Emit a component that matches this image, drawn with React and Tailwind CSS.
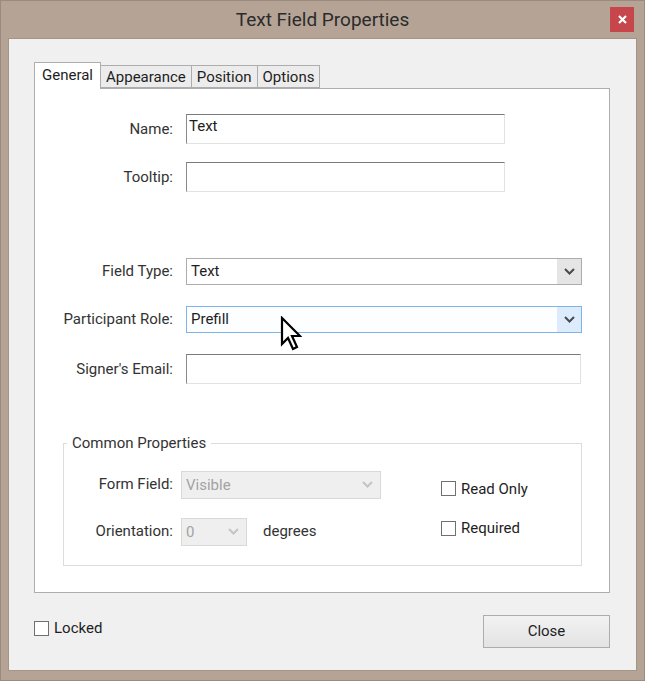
import React from "react";

const font = { fontFamily: "Roboto, 'Open Sans', sans-serif" };

function Chevron({ color = "#4a4a4a" }) {
  return (
    <svg width="11" height="7" viewBox="0 0 11 7">
      <polyline points="1,1 5.5,5.5 10,1" fill="none" stroke={color} strokeWidth="2" />
    </svg>
  );
}

function TextBox({ value, w }) {
  return (
    <div className={`${w} h-[30px] bg-white border border-t-[#7a7a7a] border-l-[#8a8a8a] border-r-[#e2e2e2] border-b-[#e2e2e2] px-[2px] text-[15px] leading-[22px] text-[#1e1e1e]`}>
      {value}
    </div>
  );
}

function Select({ value, focused }) {
  return (
    <div className={`w-[396px] h-[27px] flex border ${focused ? "border-[#7eb4ea] bg-[#fdfeff]" : "border-[#acacac] bg-white"}`}>
      <div className="flex-1 px-[4px] text-[15px] leading-[25px] text-[#1e1e1e]">{value}</div>
      <div className={`w-[24px] flex items-center justify-center ${focused ? "bg-[#dcecfc]" : "bg-[#e5e5e5]"}`}>
        <Chevron />
      </div>
    </div>
  );
}

function DisabledSelect({ value, w }) {
  return (
    <div className={`${w} h-[28px] flex border border-[#d9d9d9] bg-[#efefef]`}>
      <div className="flex-1 px-[4px] text-[15px] leading-[26px] text-[#a3a3a3]">{value}</div>
      <div className="w-[26px] flex items-center justify-center">
        <Chevron color="#c4c4c4" />
      </div>
    </div>
  );
}

function Check({ label }) {
  return (
    <div className="flex items-center gap-[5px] text-[15px] text-[#1e1e1e]">
      <div className="w-[15px] h-[15px] border border-[#707070] bg-white" />
      <span>{label}</span>
    </div>
  );
}

function Row({ label, children }) {
  return (
    <div className="flex items-center">
      <div className="w-[138px] text-right text-[15px] text-[#333]">{label}</div>
      <div className="ml-[13px]">{children}</div>
    </div>
  );
}

export default function App() {
  return (
    <div style={font} className="relative w-[645px] h-[681px] bg-[#b5a496] border border-[#9c8b7d] flex flex-col">
      {/* title bar */}
      <div className="relative h-[37px] flex items-center justify-center">
        <span className="text-[19px] text-[#2b2b2b] pt-[1px]">Text Field Properties</span>
        <div className="absolute right-[10px] top-[6px] w-[24px] h-[25px] bg-[#c7464b] flex items-center justify-center">
          <svg width="9" height="9" viewBox="0 0 9 9">
            <path d="M1 1 L8 8 M8 1 L1 8" stroke="white" strokeWidth="2.2" />
          </svg>
        </div>
      </div>

      {/* client area */}
      <div className="flex-1 mx-[7px] mb-[9px] bg-[#f0f0f0] border border-[#a59585] flex flex-col pl-[25px] pr-[26px] pt-[23px]">
        {/* tabs */}
        <div className="flex items-end h-[26px] text-[15px] text-[#1e1e1e]">
          <div className="relative z-10 h-[27px] -mb-px px-[7px] bg-white border border-b-0 border-[#adadad] leading-[24px]">General</div>
          <div className="h-[23px] px-[5px] bg-[#ececec] border border-l-0 border-[#adadad] leading-[22px]">Appearance</div>
          <div className="h-[23px] px-[5px] bg-[#ececec] border border-l-0 border-[#adadad] leading-[22px]">Position</div>
          <div className="h-[23px] px-[5px] bg-[#ececec] border border-l-0 border-[#adadad] leading-[22px]">Options</div>
        </div>

        {/* panel */}
        <div className="h-[505px] bg-white border border-[#adadad] flex flex-col pt-[25px]">
          <Row label="Name:"><TextBox value="Text" w="w-[319px]" /></Row>
          <div className="mt-[18px]">
            <Row label="Tooltip:"><TextBox value="" w="w-[319px]" /></Row>
          </div>
          <div className="mt-[66px]">
            <Row label="Field Type:"><Select value="Text" /></Row>
          </div>
          <div className="mt-[21px]">
            <Row label="Participant Role:"><Select value="Prefill" focused /></Row>
          </div>
          <div className="mt-[21px]">
            <Row label="Signer's Email:"><TextBox value="" w="w-[395px]" /></Row>
          </div>

          <fieldset className="mt-[48px] ml-[28px] w-[519px] h-[134px] border border-[#dcdcdc] px-0 pt-[16px]">
            <legend className="ml-[3px] px-[5px] text-[15px] text-[#333]">Common Properties</legend>
            <div className="flex">
              <div className="flex flex-col gap-[19px]">
                <div className="flex items-center">
                  <div className="w-[109px] text-right text-[15px] text-[#333]">Form Field:</div>
                  <div className="ml-[8px]"><DisabledSelect value="Visible" w="w-[200px]" /></div>
                </div>
                <div className="flex items-center">
                  <div className="w-[109px] text-right text-[15px] text-[#333]">Orientation:</div>
                  <div className="ml-[8px]"><DisabledSelect value="0" w="w-[66px]" /></div>
                  <span className="ml-[16px] text-[15px] text-[#333]">degrees</span>
                </div>
              </div>
              <div className="ml-[60px] flex flex-col gap-[17px] pt-[7px]">
                <Check label="Read Only" />
                <Check label="Required" />
              </div>
            </div>
          </fieldset>
        </div>

        {/* bottom */}
        <div className="flex items-center justify-between mt-[22px]">
          <div className="-mt-[6px]"><Check label="Locked" /></div>
          <div className="w-[127px] h-[33px] border border-[#adadad] bg-gradient-to-b from-[#f2f2f2] to-[#e3e3e3] flex items-center justify-center text-[15px] text-[#1e1e1e]">
            Close
          </div>
        </div>
      </div>

      {/* mouse pointer */}
      <svg className="absolute left-[279px] top-[315px]" width="22" height="36" viewBox="0 0 22 36">
        <path d="M2 2 L2 28 L8 22 L13 33 L17 31 L12 20 L20 20 Z" fill="white" stroke="black" strokeWidth="2.2" strokeLinejoin="miter" />
      </svg>
    </div>
  );
}
